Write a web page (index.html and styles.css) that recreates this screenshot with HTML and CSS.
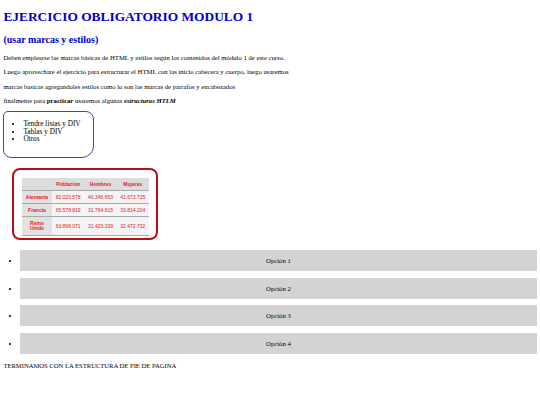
FILE: index.html
```html
<!DOCTYPE html>
<html lang="es">
<head>
<meta charset="utf-8">
<title>Ejercicio</title>
<link rel="stylesheet" href="styles.css">
</head>
<body>
<header class="cabecera">
  <h1 class="titulo">EJERCICIO OBLIGATORIO MODULO 1</h1>
  <h2 class="subtitulo">(usar marcas y estilos)</h2>
</header>
<main class="cuerpo">
  <p class="texto">Deben emplearse las marcas básicas de HTML y estilos según los contenidos del módulo 1 de este curso.</p>
  <p class="texto">Luego aprovechare el ejercicio para estructurar el HTML con las inicio cabecera y cuerpo, luego usaremos</p>
  <p class="texto">marcas basicas agregandoles estilos como lo son las marcas de parrafos y encabezados</p>
  <p class="texto">finalmente para <strong>practicar</strong> usaremos algunas <em><strong>estructuras HTLM</strong></em></p>
  <div class="caja">
    <ul class="lista">
      <li>Tendre listas y DIV</li>
      <li>Tablas y DIV</li>
      <li>Otros</li>
    </ul>
  </div>
  <div class="marco">
    <table class="tabla">
      <thead>
        <tr><th class="vacia"></th><th>Población</th><th>Hombres</th><th>Mujeres</th></tr>
      </thead>
      <tbody>
        <tr><th>Alemania</th><td>82.020.578</td><td>40.346.653</td><td>41.673.725</td></tr>
        <tr><th>Francia</th><td>65.578.819</td><td>31.764.615</td><td>33.814.204</td></tr>
        <tr class="alta"><th>Reino<br>Unido</th><td>63.896.071</td><td>31.423.339</td><td>32.472.732</td></tr>
      </tbody>
    </table>
  </div>
  <ul class="menu">
    <li class="item"><div class="opcion">Opción 1</div></li>
    <li class="item"><div class="opcion">Opción 2</div></li>
    <li class="item"><div class="opcion">Opción 3</div></li>
    <li class="item"><div class="opcion">Opción 4</div></li>
  </ul>
</main>
<footer class="pie">TERMINAMOS CON LA ESTRUCTURA DE PIE DE PAGINA</footer>
</body>
</html>
```
FILE: styles.css
```css
html, body {
  background: #ffffff;
}
body {
  margin: 3.4px;
  font-family: "Liberation Serif", "Times New Roman", serif;
  color: #000000;
  font-size: 6.7px;
  line-height: 7.7px;
}
.titulo {
  color: #0000cc;
  font-size: 13.4px;
  line-height: 15.5px;
  font-weight: bold;
  margin: 6px 0 9px 0;
}
.subtitulo {
  color: #0000cc;
  font-size: 10px;
  line-height: 11.6px;
  font-weight: bold;
  margin: 8.4px 0 8.4px 0;
}
.texto {
  font-size: 6.7px;
  line-height: 7.7px;
  margin: 6.7px 0;
}
.caja {
  width: 91px;
  height: 47px;
  border: 1.3px solid #5a35c8;
  border-radius: 5px 8px 12px 8px;
  box-sizing: border-box;
  padding: 0 0 0 2px;
}
.lista {
  margin: 7.6px 0 0 0;
  padding-left: 17px;
  font-size: 7.3px;
  line-height: 7.6px;
}
.marco {
  margin: 10px 0 0 8.6px;
  width: 146px;
  height: 72px;
  border: 2px solid #b80f14;
  border-radius: 8px;
  box-sizing: border-box;
  padding: 8px 0 0 8px;
}
.tabla {
  border-collapse: collapse;
  font-family: "Liberation Sans", Arial, sans-serif;
  font-size: 5px;
  line-height: 5.8px;
  color: #e0202a;
  width: 127px;
}
.tabla th, .tabla td {
  padding: 0 1px;
  height: 12px;
  text-align: center;
  border-bottom: 1px solid #a8a8a8;
}
.tabla th:first-child {
  width: 28px;
}
.tabla thead th {
  background: #dcdcdc;
  font-weight: bold;
}
.tabla tbody th {
  background: #e2e2e2;
  font-weight: bold;
}
.tabla tbody td {
  background: #f4f4f4;
  font-weight: normal;
}
.tabla .alta th, .tabla .alta td {
  height: 18px;
}
.menu {
  margin: 10px 0 0 0;
  padding-left: 16.8px;
  font-size: 6.7px;
}
.item {
  margin-bottom: 6.5px;
}
.opcion {
  background: #d3d3d3;
  height: 21px;
  line-height: 21px;
  text-align: center;
}
.pie {
  font-size: 6.6px;
  line-height: 7.6px;
  margin-top: 8px;
}
```
